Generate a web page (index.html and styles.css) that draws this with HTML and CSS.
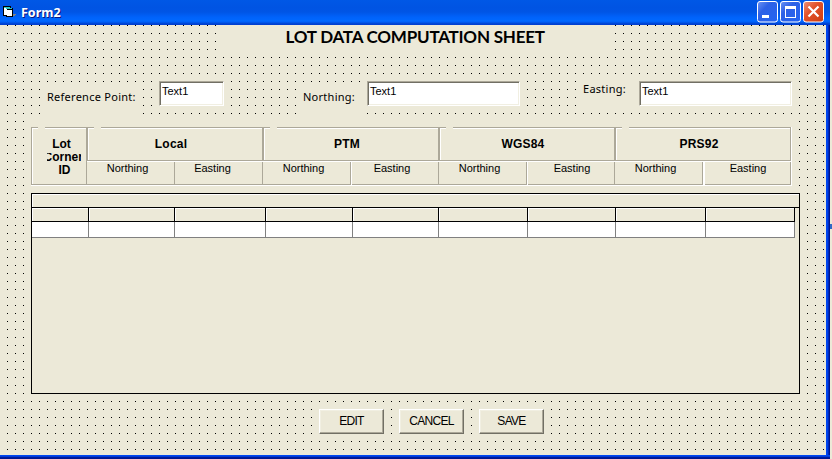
FILE: index.html
```html
<!DOCTYPE html>
<html lang="en">
<head>
<meta charset="utf-8">
<title>Form2</title>
<link rel="stylesheet" href="styles.css">
</head>
<body>
<div class="window">
  <header class="titlebar">
    <svg class="app-icon" width="13" height="12" viewBox="0 0 13 12" shape-rendering="crispEdges">
      <path d="M0 0h8v2h2v9H3v-1H0z" fill="#000"/>
      <path d="M1 1h6v1h2v1H3V2H1z" fill="#2cc8c8"/>
      <path d="M1 2h2v1h1v1h5v6H4V9H1z" fill="#fff"/>
      <path d="M10 8h3v1h-1v1h-2z" fill="#808080"/>
    </svg>
    <h1>Form2</h1>
    <div class="controls">
      <svg width="21" height="22" viewBox="0 0 21 22"><rect class="ctl" x=".5" y=".5" width="20" height="20.5" rx="2.5" fill="url(#blue)"/><path d="M5 14h7v3H5z" fill="#fff"/></svg>
      <svg width="21" height="22" viewBox="0 0 21 22"><rect class="ctl" x=".5" y=".5" width="20" height="20.5" rx="2.5" fill="url(#blue)"/><path fill-rule="evenodd" d="M5 5h11v12H5zM6 8v8h9V8z" fill="#fff"/></svg>
      <svg width="21" height="22" viewBox="0 0 21 22"><rect class="ctl" x=".5" y=".5" width="20" height="20.5" rx="2.5" fill="url(#red)"/><path d="M5.5 5.5l10 10M15.500 5.500l-10 10" stroke="#fff" stroke-width="2.200"/></svg>
      <svg class="defs" width="0" height="0"><defs>
        <linearGradient id="blue" x1="0" y1="0" x2="1" y2="1"><stop offset="0" stop-color="#6d94f4"/><stop offset=".35" stop-color="#2d61e6"/><stop offset="1" stop-color="#2364f2"/></linearGradient>
        <linearGradient id="red" x1="0" y1="0" x2="1" y2="1"><stop offset="0" stop-color="#ee9278"/><stop offset=".4" stop-color="#e2532b"/><stop offset="1" stop-color="#cd3c10"/></linearGradient>
      </defs></svg>
    </div>
  </header>
  <main class="client">
    <h2><span>LOT DATA COMPUTATION SHEET</span></h2>
    <section class="inputs">
      <label class="cap ref"><span>Reference Point:</span></label><div class="text t1">Text1</div>
      <label class="cap north"><span>Northing:</span></label><div class="text t2">Text1</div>
      <label class="cap east"><span>Easting:</span></label><div class="text t3">Text1</div>
    </section>
    <section class="heads">
      <div class="frame corner"><b>Lot</b><b class="clip"><span>Corner</span></b><b>ID</b></div>
      <div class="group local"><div class="frame"><b>Local</b></div><div class="pair"><span>Northing</span><span>Easting</span></div></div>
      <div class="group ptm"><div class="frame"><b>PTM</b></div><div class="pair"><span>Northing</span><span>Easting</span></div></div>
      <div class="group"><div class="frame"><b>WGS84</b></div><div class="pair"><span>Northing</span><span>Easting</span></div></div>
      <div class="group last"><div class="frame"><b>PRS92</b></div><div class="pair"><span>Northing</span><span>Easting</span></div></div>
    </section>
    <section class="datagrid">
      <div class="band"></div>
      <div class="row header"><i></i><i></i><i></i><i></i><i></i><i></i><i></i><i></i><i></i></div>
      <div class="row"><i></i><i></i><i></i><i></i><i></i><i></i><i></i><i></i><i></i></div>
    </section>
    <nav class="actions"><button><span>EDIT</span></button><button><span>CANCEL</span></button><button><span>SAVE</span></button></nav>
  </main>
</div>
<div class="behind"></div>
</body>
</html>
```
FILE: styles.css
```css
* { box-sizing: border-box; }
body { margin: 0; display: flex; background: #ece9d8; color: #000; font: 11px/13px "Liberation Sans", Arial, sans-serif; overflow: hidden; }
.window { width: 830px; height: 459px; background: linear-gradient(90deg, #0831d9 0, #0048f1 826px, #0040e8 828px, #001590 829px, #00138c 830px); }
.behind { width: 2px; height: 5px; margin-top: 224px; background: #316ac5; }
.titlebar { height: 25px; display: flex; align-items: center; padding-left: 3px;
  background: linear-gradient(#0058e6 0, #0054e3 7px, #0055e5 12px, #0062fa 17px, #0068ff 21px, #005df5 22px, #0040cc 24px, #003dd7 25px); }
.app-icon { margin-top: -1px; }
h1 { margin: 0 0 0 5px; color: #fff; font: bold 12.5px/20px "Noto Sans", sans-serif; text-shadow: 1px 1px #0a1883; }
.controls { display: flex; gap: 2px; margin: -2px 6px 0 auto; }
.ctl { stroke: #fff; }
.defs { position: absolute; }
.client { width: 826px; height: 430px; background: #ece9d8 conic-gradient(from 0deg at 1px 1px, transparent 75%, #000 0) 7px 0 / 8px 8px; }
.window::after { content: ""; display: block; height: 4px; background: linear-gradient(#0048f1 0 1px, #003bda 1px 2px, #001ea0 2px, #00138c); }
h2 { margin: 0 0 0 216px; width: 398px; height: 31px; background: #ece9d8; font: bold 17px/24px "Lato", sans-serif; text-align: center; letter-spacing: -.22px; }
h2 span { display: inline-block; width: 259px; white-space: nowrap; text-align: left; }
.inputs { display: flex; align-items: flex-start; height: 64px; padding-top: 25px; }
.cap { background: #ece9d8; font: 11px/15px "Noto Sans", sans-serif; letter-spacing: .26px; white-space: nowrap; }
.ref { margin: 1px 17px 0 47px; width: 95px; height: 36px; padding-top: 7px; }
.north { margin: 1px 1px 0 79px; width: 63px; height: 36px; padding-top: 7px; }
.east { margin: -7px 1px 0 63px; width: 55px; height: 38px; padding-top: 7px; }
.text { height: 25px; background: #fff; padding: 3px 2px; border: 1px solid; border-color: #aca899 #fff #fff #aca899; box-shadow: inset 1px 1px #716f64, inset -1px -1px #f1efe2; }
.t1 { width: 65px; }
.t2 { width: 153px; }
.t3 { width: 153px; }
.heads { display: grid; grid-template-columns: 56px 176px 176px 176px 177px; width: 761px; height: 67px; margin-left: 31px; padding: 7px 0 1px; background: #ece9d8; box-shadow: 0 1px #ece9d8; }
.frame { position: relative; border: 1px solid #aca899; box-shadow: inset 1px 1px #fff; text-align: center; font-size: 12px; }
.frame::before { content: ""; position: absolute; left: 6px; top: -1px; width: 7px; height: 2px; background: #ece9d8; }
.frame b { display: block; }
.corner { height: 58px; padding: 10px 0 0 5px; box-shadow: inset 1px 1px #fff, 0 1px #fff; }
.corner b:last-child { padding-left: 6px; }
.clip { padding-left: 4px; }
.clip span { display: inline-block; width: 34px; height: 10px; overflow: hidden; line-height: 9px; text-indent: -3px; white-space: nowrap; vertical-align: top; margin-top: 2px; }
.group { display: grid; grid-template-rows: 34px 24px; }
.group .frame { padding-top: 10px; box-shadow: inset 1px 1px #fff, 0 1px #fff; }
.group .frame b { margin-left: -8px; letter-spacing: .2px; }
.pair { display: grid; grid-template-columns: 88px 88px; border-bottom: 1px solid #aca899; box-shadow: 0 1px #fff; }
.pair span { text-align: center; border-right: 1px solid #aca899; padding: 0 6px 0 0; box-shadow: 1px 0 #fff; height: 23px; margin-top: 1px; }
.pair span:last-child { padding-right: 0; padding-left: 3px; box-shadow: none; }
.local .pair span:last-child { padding-right: 15px; }
.ptm .pair span:last-child { padding-right: 8px; }
.local .pair span:first-child { box-shadow: none; }
.last { width: 176px; box-shadow: 1px 0 #fff; }
.last .pair span:first-child { box-shadow: 2px 0 #fff; }
.datagrid { width: 769px; height: 201px; margin: 6px 0 0 31px; border: 1px solid #000; background: #ece9d8; }
.band { height: 14px; border-bottom: 1px solid #000; box-shadow: inset 1px 1px #fff; }
.row { display: grid; width: 763px; height: 16px; grid-template-columns: 57px 86px 91px 87px 86px 89px 88px 90px 89px; background: #fff; border-bottom: 1px solid #808080; }
.row i { border-right: 1px solid #808080; }
.header { height: 14px; background: #ece9d8; border-color: #000; }
.header i { border-color: #000; box-shadow: inset 1px 1px #fff; }
.actions { display: flex; gap: 15px; margin: 15px 0 0 319px; }
button { width: 65px; height: 25px; padding: 0 0 1px; border: 1px solid; border-color: #fff #716f64 #716f64 #fff; border-radius: 0; background: #ece9d8; box-shadow: inset -1px -1px #aca899, inset 1px 1px #f1efe2; font: 12px/14px "Liberation Sans", Arial, sans-serif; letter-spacing: -.7px; color: #000; }
```
